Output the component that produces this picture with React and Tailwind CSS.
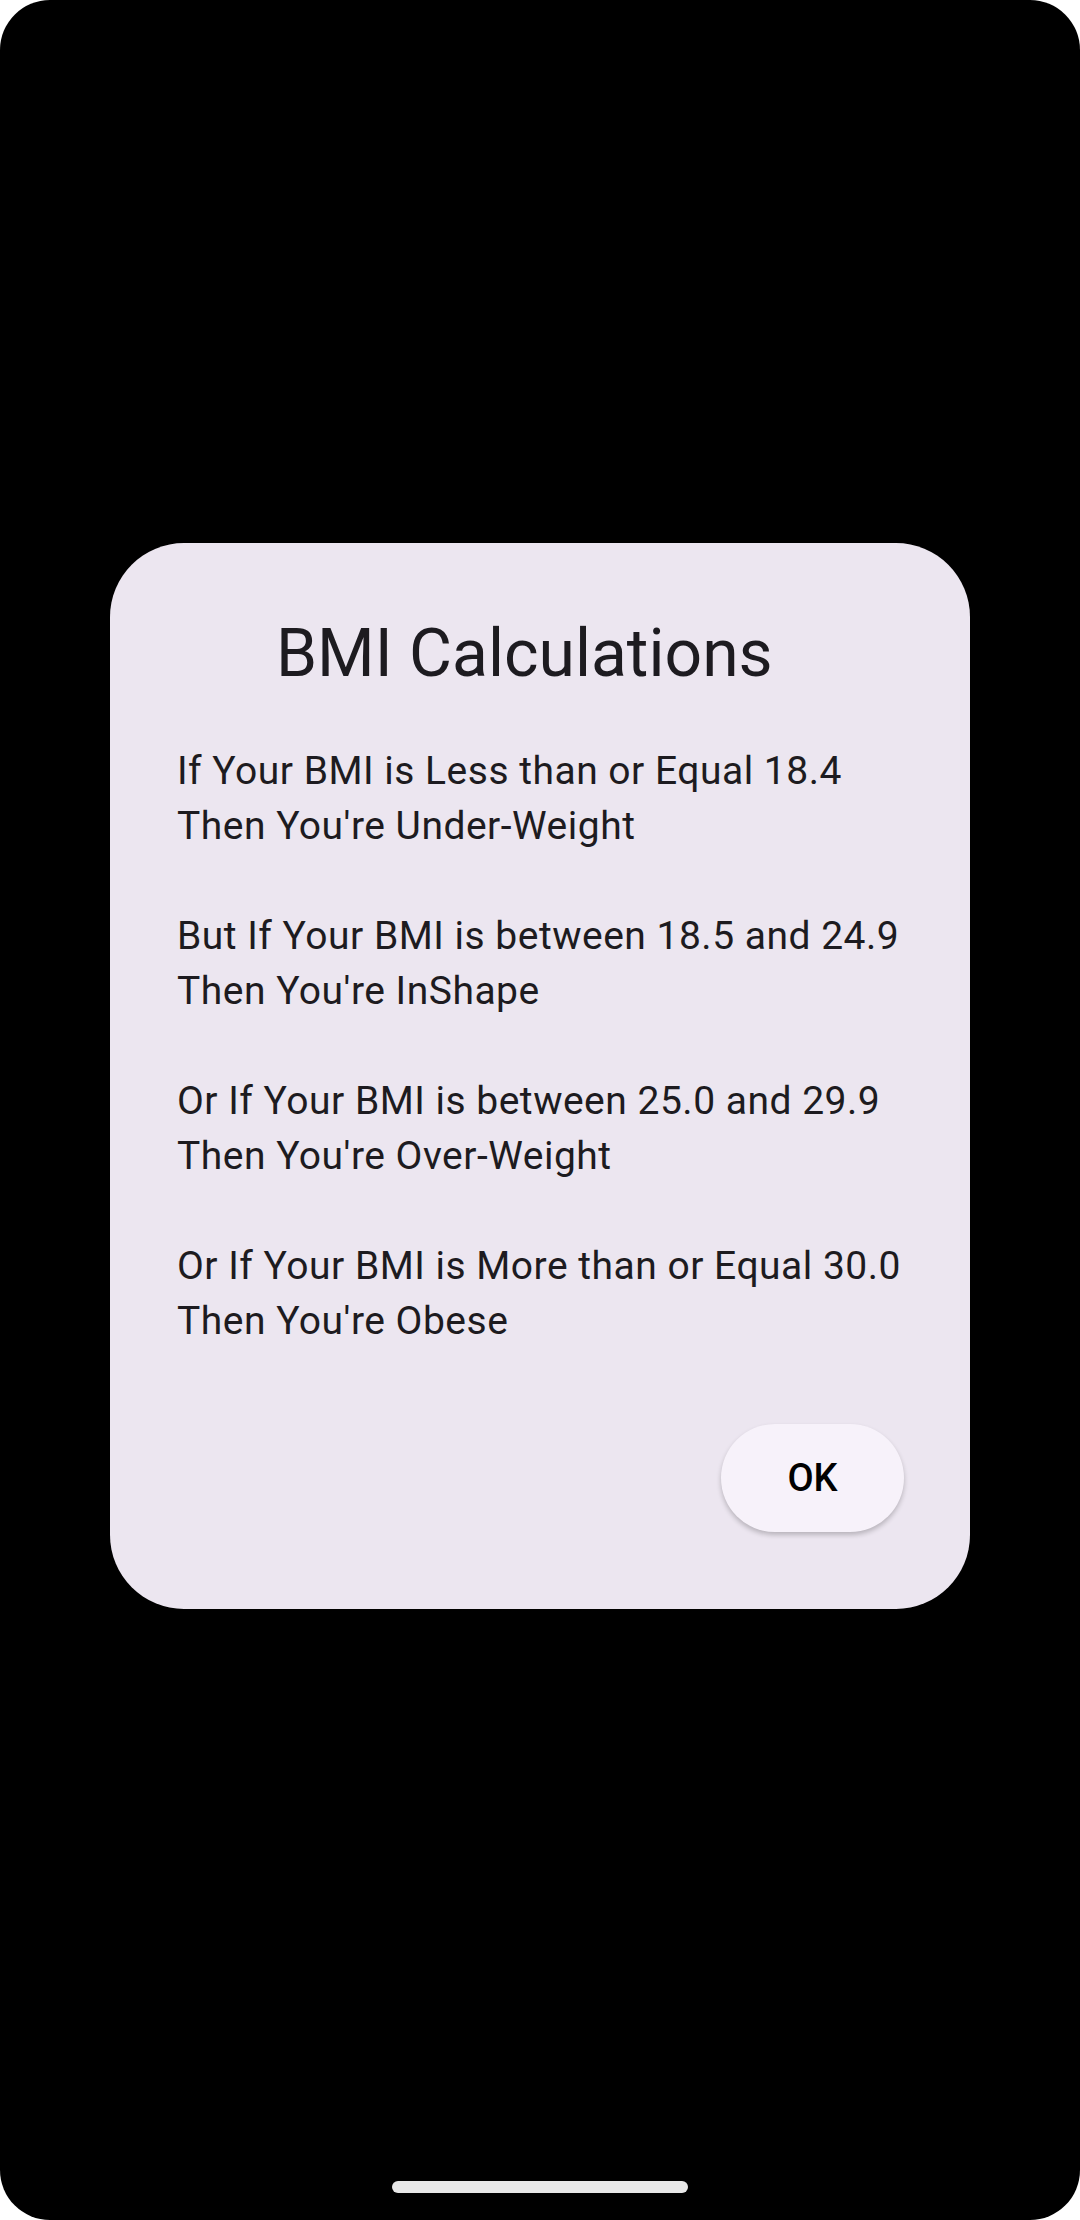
import React from 'react'

const RULES = [
  ['If Your BMI is Less than or Equal 18.4', "Then You're Under-Weight"],
  ['But If Your BMI is between 18.5 and 24.9', "Then You're InShape"],
  ['Or If Your BMI is between 25.0 and 29.9', "Then You're Over-Weight"],
  ['Or If Your BMI is More than or Equal 30.0', "Then You're Obese"],
]

export default function App() {
  return (
    <div className="w-[1080px] h-[2220px] bg-white" style={{ fontFamily: 'Roboto, "Noto Sans", sans-serif' }}>
      <div className="w-full h-full bg-black rounded-[50px] flex flex-col items-center">
        <div className="mt-[543px] w-[860px] h-[1066px] bg-[#ece6f0] rounded-[74px] flex flex-col pt-[72px] pl-[67px] pr-[66px]">
          <h2 className="pl-[99px] text-[66px] leading-[78px] text-[#1d1b20] font-normal">BMI Calculations</h2>
          <div className="mt-[51px] text-[39px] leading-[55px] text-[#1d1b20] tracking-[0.5px]">
            {RULES.map((rule, i) => (
              <div key={i} className={i > 0 ? 'mt-[55px]' : ''}>
                <p>{rule[0]}</p>
                <p>{rule[1]}</p>
              </div>
            ))}
          </div>
          <div className="mt-[75px] flex justify-end">
            <button className="w-[183px] h-[108px] rounded-full bg-[#f7f2fa] text-black text-[38px] font-medium shadow-[0_3px_5px_rgba(0,0,0,0.22)]">
              OK
            </button>
          </div>
        </div>
        <div className="mt-auto mb-[27px] w-[296px] h-[12px] rounded-full bg-[#e8e8e8]" />
      </div>
    </div>
  )
}
